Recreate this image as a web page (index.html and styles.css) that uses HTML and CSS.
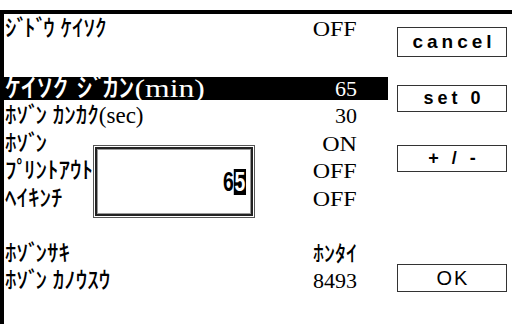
FILE: index.html
```html
<!DOCTYPE html>
<html lang="ja">
<head>
<meta charset="utf-8">
<link rel="stylesheet" href="styles.css">
</head>
<body>
<div class="screen">
  <div class="list">
    <div class="row first"><span class="lbl"><span class="v">ｼﾞ</span><span class="v">ﾄﾞ</span>ｳ ｹｲｿｸ</span><span class="val">OFF</span></div>
    <div class="row gap"></div>
    <div class="row sel"><span class="lbl">ｹｲｿｸ <span class="v">ｼﾞ</span>ｶﾝ(min)</span><span class="val num-val">65</span></div>
    <div class="row"><span class="lbl">ﾎ<span class="v">ｿﾞ</span>ﾝ ｶﾝｶｸ(sec)</span><span class="val num-val">30</span></div>
    <div class="row"><span class="lbl">ﾎ<span class="v">ｿﾞ</span>ﾝ</span><span class="val">ON</span></div>
    <div class="row"><span class="lbl"><span class="v">ﾌﾟ</span>ﾘﾝﾄｱｳﾄ</span><span class="val">OFF</span></div>
    <div class="row"><span class="lbl">ﾍｲｷﾝﾁ</span><span class="val">OFF</span></div>
    <div class="row"></div>
    <div class="row"><span class="lbl">ﾎ<span class="v">ｿﾞ</span>ﾝｻｷ</span><span class="val kana">ﾎﾝﾀｲ</span></div>
    <div class="row"><span class="lbl">ﾎ<span class="v">ｿﾞ</span>ﾝ ｶﾉｳｽｳ</span><span class="val num-val">8493</span></div>
  </div>
  <div class="buttons">
    <div class="btn b-cancel">cancel</div>
    <div class="btn b-set">set 0</div>
    <div class="btn b-sign">+ / -</div>
    <div class="btn b-ok">OK</div>
  </div>
  <div class="dialog">
    <div class="dialog-inner"><span class="num">6<span class="cur">5</span></span></div>
  </div>
</div>
</body>
</html>
```
FILE: styles.css
```css
html, body {
  margin: 0;
  padding: 0;
  background: #fff;
}
.screen {
  position: relative;
  margin-top: 10px;
  height: 310px;
  overflow: hidden;
  border-top: 4px solid #000;
  border-left: 4px solid #000;
  display: flex;
  font-family: "Liberation Serif", "Noto Sans CJK JP", serif;
  color: #000;
}
.list {
  width: 384px;
  flex: none;
  display: flex;
  flex-direction: column;
}
.row {
  flex: none;
  height: 27.5px;
  display: flex;
  align-items: center;
  justify-content: space-between;
  padding: 0 31px 0 1px;
  white-space: nowrap;
}
.row.first { height: 29px; }
.row.gap { height: 32px; }
.lbl {
  display: inline-block;
  font-size: 23px;
  line-height: 24px;
  font-weight: 500;
}
.val {
  display: inline-block;
  font-size: 20px;
  line-height: 24px;
  transform: scaleX(1.2);
  transform-origin: 100% 50%;
}
.val.num-val { transform: scaleX(1.1); }
.val.kana { font-size: 22px; font-weight: 500; transform: none; }
.v { letter-spacing: -0.17em; }
.sel {
  height: 23px;
  margin: 2px 0 2.5px;
  background: #000;
  color: #fff;
}
.sel .lbl {
  font-size: 26px;
  line-height: 23px;
  transform: scaleX(1.22);
  transform-origin: 0 50%;
}
.buttons {
  flex: none;
  display: flex;
  flex-direction: column;
  padding-left: 9px;
}
.btn {
  flex: none;
  width: 110px;
  height: 27px;
  border: 1px solid #333;
  box-sizing: border-box;
  font-family: "Liberation Sans", sans-serif;
  font-weight: bold;
  font-size: 18px;
  letter-spacing: 4px;
  text-indent: 4px;
  text-align: center;
  line-height: 25px;
}
.b-cancel { margin-top: 13px; height: 30px; line-height: 28px; font-size: 19px; }
.b-set { margin-top: 28px; }
.b-sign { margin-top: 33px; }
.b-ok { margin-top: 92px; height: 28px; line-height: 26px; font-weight: normal; font-size: 20px; letter-spacing: 2px; text-indent: 2px; }
.dialog {
  position: absolute;
  left: 89px;
  top: 131px;
  width: 162px;
  height: 73px;
  box-sizing: border-box;
  border: 1px solid #555;
  padding: 1px;
  background: #fff;
}
.dialog-inner {
  height: 100%;
  box-sizing: border-box;
  border: 2px solid #222;
  box-shadow: inset 0 0 0 1px #999;
  display: flex;
  justify-content: flex-end;
  align-items: center;
  padding-right: 5px;
}
.num {
  display: inline-block;
  font-family: "Liberation Sans", sans-serif;
  font-size: 27px;
  line-height: 26px;
  font-weight: bold;
  transform: scaleX(0.72);
  transform-origin: 100% 50%;
}
.cur {
  display: inline-block;
  background: #000;
  color: #fff;
  padding: 0 1px;
}
```
